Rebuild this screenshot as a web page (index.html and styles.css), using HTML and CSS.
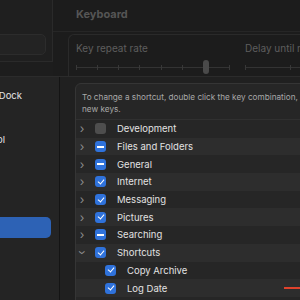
FILE: index.html
```html
<!DOCTYPE html>
<html lang="en">
<head>
    <meta charset="UTF-8">
    <title>Keyboard Shortcuts</title>
    <link rel="stylesheet" href="styles.css">
</head>
<body>

    <div class="window">
        <div class="win-side">
            <div class="search"></div>
        </div>
        <div class="win-main">
            <div class="title">Keyboard</div>
            <div class="repeat-box">
                <div class="slider-col">
                    <div class="label">Key repeat rate</div>
                    <div class="track first">
                        <span class="tick"></span><span class="tick"></span><span class="tick"></span>
                        <span class="tick"></span><span class="tick"></span><span class="tick"></span>
                        <span class="knob"></span>
                        <span class="tick"></span>
                    </div>
                </div>
                <div class="slider-col">
                    <div class="label">Delay until repeat</div>
                    <div class="track second">
                        <span class="tick"></span><span class="tick"></span><span class="tick"></span>
                    </div>
                </div>
            </div>
        </div>
    </div>

    <div class="sheet">
        <div class="sheet-side">
            <div class="side-item dock"><span>Launchpad &amp; Dock</span></div>
            <div class="side-item mission"><span>Mission Control</span></div>
            <div class="side-item selected"></div>
        </div>
        <div class="sheet-main">
            <div class="box">
                <div class="hint">To change a shortcut, double click the key combination, and then type the<br>new keys.</div>
                <div class="list">
                    <div class="row"><span class="chev">&#8250;</span><span class="cb off"></span>Development</div>
                    <div class="row alt"><span class="chev">&#8250;</span><span class="cb mixed"></span>Files and Folders</div>
                    <div class="row"><span class="chev">&#8250;</span><span class="cb mixed"></span>General</div>
                    <div class="row alt"><span class="chev">&#8250;</span><span class="cb on"></span>Internet</div>
                    <div class="row"><span class="chev">&#8250;</span><span class="cb on"></span>Messaging</div>
                    <div class="row alt"><span class="chev">&#8250;</span><span class="cb on"></span>Pictures</div>
                    <div class="row"><span class="chev">&#8250;</span><span class="cb mixed"></span>Searching</div>
                    <div class="row alt"><span class="chev open">&#8250;</span><span class="cb on"></span>Shortcuts</div>
                    <div class="row child"><span class="cb on"></span>Copy Archive</div>
                    <div class="row alt child"><span class="cb on"></span>Log Date<span class="keys"></span></div>
                </div>
            </div>
        </div>
    </div>

</body>
</html>
```

FILE: styles.css
```css
body {
    margin: 0;
    width: 300px;
    height: 300px;
    overflow: hidden;
    background-color: #1d1d1d;
    font-family: Inter, "Liberation Sans", sans-serif;
}

/* dimmed window behind the sheet */
.window {
    display: flex;
    height: 76px;
    overflow: hidden;
}

.win-side {
    width: 53px;
    flex-shrink: 0;
    background-color: #1f1f1f;
    border-right: 1px solid #2a2a2a;
    height: 62px;
    border-bottom: 1px solid #2a2a2a;
    padding-top: 34px;
    box-sizing: border-box;
}

.search {
    width: 52px;
    margin-left: -6px;
    height: 21px;
    background-color: #232323;
    border: 1px solid #2c2c2c;
    border-radius: 5px;
    box-sizing: border-box;
}

.win-main {
    flex: 1;
    background-color: #1c1c1c;
}

.title {
    height: 32px;
    box-sizing: border-box;
    padding: 7px 0 0 23px;
    font-size: 11px;
    font-weight: 700;
    color: #555;
    border-bottom: 1px solid #262626;
}

.repeat-box {
    display: flex;
    margin: 2px 0 0 15px;
    height: 60px;
    border: 1px solid #2a2a2a;
    border-right: none;
    border-radius: 6px 0 0 0;
    padding: 7px 0 0 7px;
    box-sizing: border-box;
}

.slider-col {
    width: 169px;
    flex-shrink: 0;
}

.label {
    font-size: 10px;
    color: #5e5e5e;
}

.track {
    margin-top: 13px;
    height: 1px;
    background-color: #333;
    display: flex;
    justify-content: space-between;
    width: 154px;
}

.track.second {
    width: 90px;
}

.tick {
    width: 1px;
    height: 5px;
    margin-top: -2px;
    background-color: #383838;
}

.knob {
    width: 6px;
    height: 14px;
    margin-top: -7px;
    border-radius: 3px;
    background-color: #4a4a4a;
}

/* sheet */
.sheet {
    display: flex;
    height: 224px;
    border-top: 1px solid #2b2b2b;
    box-sizing: border-box;
}

.sheet-side {
    width: 59px;
    flex-shrink: 0;
    background-color: #242424;
    border-right: 1px solid #141414;
    overflow: hidden;
    padding-top: 12px;
}

.side-item {
    display: flex;
    justify-content: flex-end;
    height: 22px;
    margin-bottom: 22px;
    font-size: 9.5px;
    line-height: 13px;
    color: #e4e4e4;
    white-space: nowrap;
}

.side-item span {
    flex-shrink: 0;
}

.side-item.dock {
    width: 22px;
}

.side-item.mission {
    width: 5px;
}

.side-item.selected {
    margin-top: 62px;
    width: 57px;
    height: 21px;
    border-radius: 5px;
    background-color: #2d62b5;
    margin-left: -6px;
}

.sheet-main {
    flex: 1;
    background-color: #202020;
    padding: 6px 0 0 15px;
    overflow: hidden;
}

.box {
    width: 260px;
    height: 230px;
    background-color: #262626;
    border: 1px solid #353535;
    border-radius: 6px;
    box-sizing: border-box;
}

.hint {
    padding: 7px 0 4px 6px;
    font-size: 8.2px;
    line-height: 12px;
    color: #a8a8a8;
    white-space: nowrap;
    border-bottom: 1px solid #303030;
}

.row {
    display: flex;
    align-items: center;
    height: 17.7px;
    font-size: 9.5px;
    color: #e2e2e2;
    background-color: #262626;
}

.row.alt {
    background-color: #2d2d2d;
}

.chev {
    width: 8px;
    margin: 0 9px 0 2px;
    font-size: 12px;
    color: #8c8c8c;
    text-align: center;
}

.chev.open {
    transform: rotate(90deg);
}

.cb {
    position: relative;
    width: 11px;
    height: 11px;
    border-radius: 3px;
    margin-right: 11px;
    flex-shrink: 0;
    box-sizing: border-box;
}

.row.child .cb {
    margin-left: 29px;
}

.cb.off {
    background-color: #4e4e4e;
}

.cb.mixed, .cb.on {
    background-color: #2f72db;
}

.cb.mixed::after {
    content: "";
    position: absolute;
    left: 2px;
    top: 4.5px;
    width: 7px;
    height: 2px;
    background-color: #fff;
}

.cb.on::after {
    content: "";
    position: absolute;
    left: 3.5px;
    top: 1.5px;
    width: 3px;
    height: 5px;
    border: solid #fff;
    border-width: 0 1.6px 1.6px 0;
    transform: rotate(40deg);
}

.keys {
    margin-left: auto;
    margin-right: 30px;
    width: 20px;
    height: 2px;
    background-color: #e0422c;
}
```
